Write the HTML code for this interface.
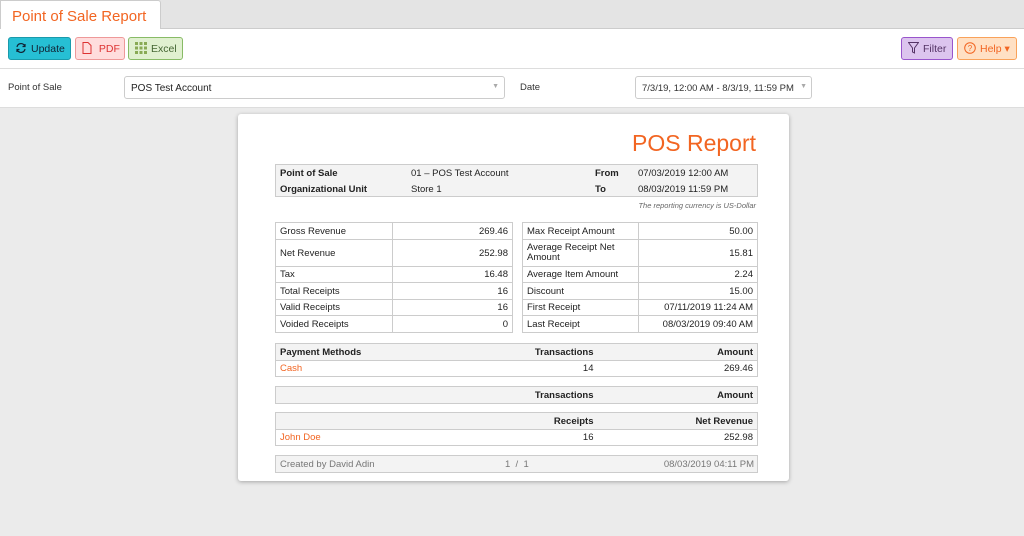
<!DOCTYPE html>
<html><head><meta charset="utf-8"><style>
*{box-sizing:border-box;margin:0;padding:0}
body{width:1024px;height:536px;overflow:hidden;background:#ebebeb;font-family:"Liberation Sans",sans-serif;font-size:9px;color:#222;position:relative}
.a{position:absolute}
.btn{position:absolute;top:37px;height:23px;border-radius:3px;font-size:10.5px;line-height:23px;padding:0 6px;white-space:nowrap}
.btn svg{vertical-align:middle;margin-right:4px;position:relative;top:-1px}
table{border-collapse:collapse;position:absolute;font-size:9.5px}
td{border:1px solid #ccc;padding:1px 4px 0;height:16.5px}
.r{text-align:right}
.b{font-weight:bold}
.o{color:#f26522}
.g{background:#f3f3f3}
</style></head><body>
<div class="a" style="left:0;top:0;width:1024px;height:29px;background:#e4e4e4;border-bottom:1px solid #ccc"></div>
<div class="a" style="left:0;top:0;width:161px;height:30px;background:#fff;border:1px solid #ccc;border-bottom:none;border-top-right-radius:3px;color:#f26522;font-size:15px;padding:7px 0 0 11px">Point of Sale Report</div>
<div class="a" style="left:0;top:29px;width:1024px;height:40px;background:#fff;border-bottom:1px solid #ddd"></div>
<div class="a" style="left:0;top:69px;width:1024px;height:39px;background:#fff;border-bottom:1px solid #ddd"></div>
<div class="btn" style="left:8px;width:63px;background:#26bfd4;border:1px solid #1a9aab;color:#123"><svg width="12" height="12" viewBox="0 0 12 12" fill="none" stroke="#123" stroke-width="1.2"><path d="M2 5a4 4 0 0 1 7-2l1 1M10 2v2.5H7.5M10 7a4 4 0 0 1-7 2l-1-1M2 10V7.5h2.5"/></svg>Update</div>
<div class="btn" style="left:75px;width:50px;background:#fdd;border:1px solid #e99;color:#d33"><svg width="10" height="12" viewBox="0 0 10 12" fill="none" stroke="#d33"><path d="M1 .5h5l3 3v8H1z"/></svg> PDF</div>
<div class="btn" style="left:128px;width:55px;background:#e0f0d0;border:1px solid #8b6;color:#463"><svg width="12" height="12" viewBox="0 0 12 12" fill="#8a5"><rect x="0" y="0" width="3" height="3"/><rect x="4.5" y="0" width="3" height="3"/><rect x="9" y="0" width="3" height="3"/><rect x="0" y="4.5" width="3" height="3"/><rect x="4.5" y="4.5" width="3" height="3"/><rect x="9" y="4.5" width="3" height="3"/><rect x="0" y="9" width="3" height="3"/><rect x="4.5" y="9" width="3" height="3"/><rect x="9" y="9" width="3" height="3"/></svg>Excel</div>
<div class="btn" style="left:901px;width:52px;background:#dcc4ee;border:1px solid #95c;color:#536"><svg width="11" height="12" viewBox="0 0 11 12" fill="none" stroke="#536"><path d="M.5 .5h10L6.5 6v5l-2-1V6z"/></svg>Filter</div>
<div class="btn" style="left:957px;width:60px;background:#ffe0c4;border:1px solid #f9a25a;color:#f26522"><svg width="12" height="12" viewBox="0 0 12 12" fill="none" stroke="#f26522"><circle cx="6" cy="6" r="5.3"/><text x="6" y="9" font-size="8" text-anchor="middle" fill="#f26522" stroke="none">?</text></svg>Help ▾</div>
<div class="a" style="left:8px;top:82px;font-size:9.5px;color:#333">Point of Sale</div>
<div class="a" style="left:124px;top:76px;width:381px;height:23px;border:1px solid #ccc;border-radius:3px;font-size:10px;padding:6px 0 0 6px">POS Test Account<span style="position:absolute;right:5px;top:6px;color:#aaa;font-size:7px">▼</span></div>
<div class="a" style="left:520px;top:82px;font-size:9.5px;color:#333">Date</div>
<div class="a" style="left:635px;top:76px;width:177px;height:23px;border:1px solid #ccc;border-radius:3px;font-size:9.5px;padding:6px 0 0 6px;color:#333">7/3/19, 12:00 AM - 8/3/19, 11:59 PM<span style="position:absolute;right:4px;top:6px;color:#aaa;font-size:7px">▼</span></div>
<div class="a" style="left:238px;top:114px;width:551px;height:367px;background:#fff;border-radius:3px;box-shadow:0 1px 4px rgba(0,0,0,.3)"></div>
<div class="a" style="right:268px;top:130px;font-size:23px;color:#f26522">POS Report</div>
<div class="a g" style="left:275px;top:164px;width:483px;height:33px;border:1px solid #ccc;font-size:9.5px">
<div class="a b" style="left:4px;top:3px">Point of Sale</div><div class="a" style="left:135px;top:3px">01 – POS Test Account</div><div class="a b" style="left:319px;top:3px">From</div><div class="a" style="left:362px;top:3px">07/03/2019 12:00 AM</div>
<div class="a b" style="left:4px;top:19px">Organizational Unit</div><div class="a" style="left:135px;top:19px">Store 1</div><div class="a b" style="left:319px;top:19px">To</div><div class="a" style="left:362px;top:19px">08/03/2019 11:59 PM</div></div>
<div class="a" style="right:268px;top:201px;font-size:7.5px;font-style:italic;color:#666">The reporting currency is US-Dollar</div>
<table style="left:275px;top:222px;width:238px"><tr><td style="width:117px">Gross Revenue</td><td class="r">269.46</td></tr><tr><td style="height:27px">Net Revenue</td><td class="r">252.98</td></tr><tr><td>Tax</td><td class="r">16.48</td></tr><tr><td>Total Receipts</td><td class="r">16</td></tr><tr><td>Valid Receipts</td><td class="r">16</td></tr><tr><td>Voided Receipts</td><td class="r">0</td></tr></table>
<table style="left:522px;top:222px;width:236px"><tr><td style="width:116px">Max Receipt Amount</td><td class="r">50.00</td></tr><tr><td style="height:27px;line-height:10px">Average Receipt Net Amount</td><td class="r">15.81</td></tr><tr><td>Average Item Amount</td><td class="r">2.24</td></tr><tr><td>Discount</td><td class="r">15.00</td></tr><tr><td>First Receipt</td><td class="r">07/11/2019 11:24 AM</td></tr><tr><td>Last Receipt</td><td class="r">08/03/2019 09:40 AM</td></tr></table>
<table style="left:275px;top:343px;width:483px"><tr class="g b"><td style="border-right:none">Payment Methods</td><td class="r" style="border:none;border-top:1px solid #ccc;border-bottom:1px solid #ccc;width:160px">Transactions</td><td class="r" style="border-left:none;width:160px">Amount</td></tr><tr><td class="o" style="border-right:none">Cash</td><td class="r" style="border:none;border-bottom:1px solid #ccc">14</td><td class="r" style="border-left:none">269.46</td></tr></table>
<table style="left:275px;top:386px;width:483px"><tr class="g b"><td style="border-right:none"></td><td class="r" style="border:none;border-top:1px solid #ccc;border-bottom:1px solid #ccc;width:160px">Transactions</td><td class="r" style="border-left:none;width:160px">Amount</td></tr></table>
<table style="left:275px;top:412px;width:483px"><tr class="g b"><td style="border-right:none"></td><td class="r" style="border:none;border-top:1px solid #ccc;border-bottom:1px solid #ccc;width:160px">Receipts</td><td class="r" style="border-left:none;width:160px">Net Revenue</td></tr><tr><td class="o" style="border-right:none">John Doe</td><td class="r" style="border:none;border-bottom:1px solid #ccc">16</td><td class="r" style="border-left:none">252.98</td></tr></table>
<div class="a g" style="left:275px;top:455px;width:483px;height:18px;border:1px solid #ccc;color:#777;font-size:9.5px">
<div class="a" style="left:4px;top:3px">Created by David Adin</div><div class="a" style="left:229px;top:3px">1 &nbsp;/ &nbsp;1</div><div class="a" style="right:3px;top:3px">08/03/2019 04:11 PM</div></div>
</body></html>
